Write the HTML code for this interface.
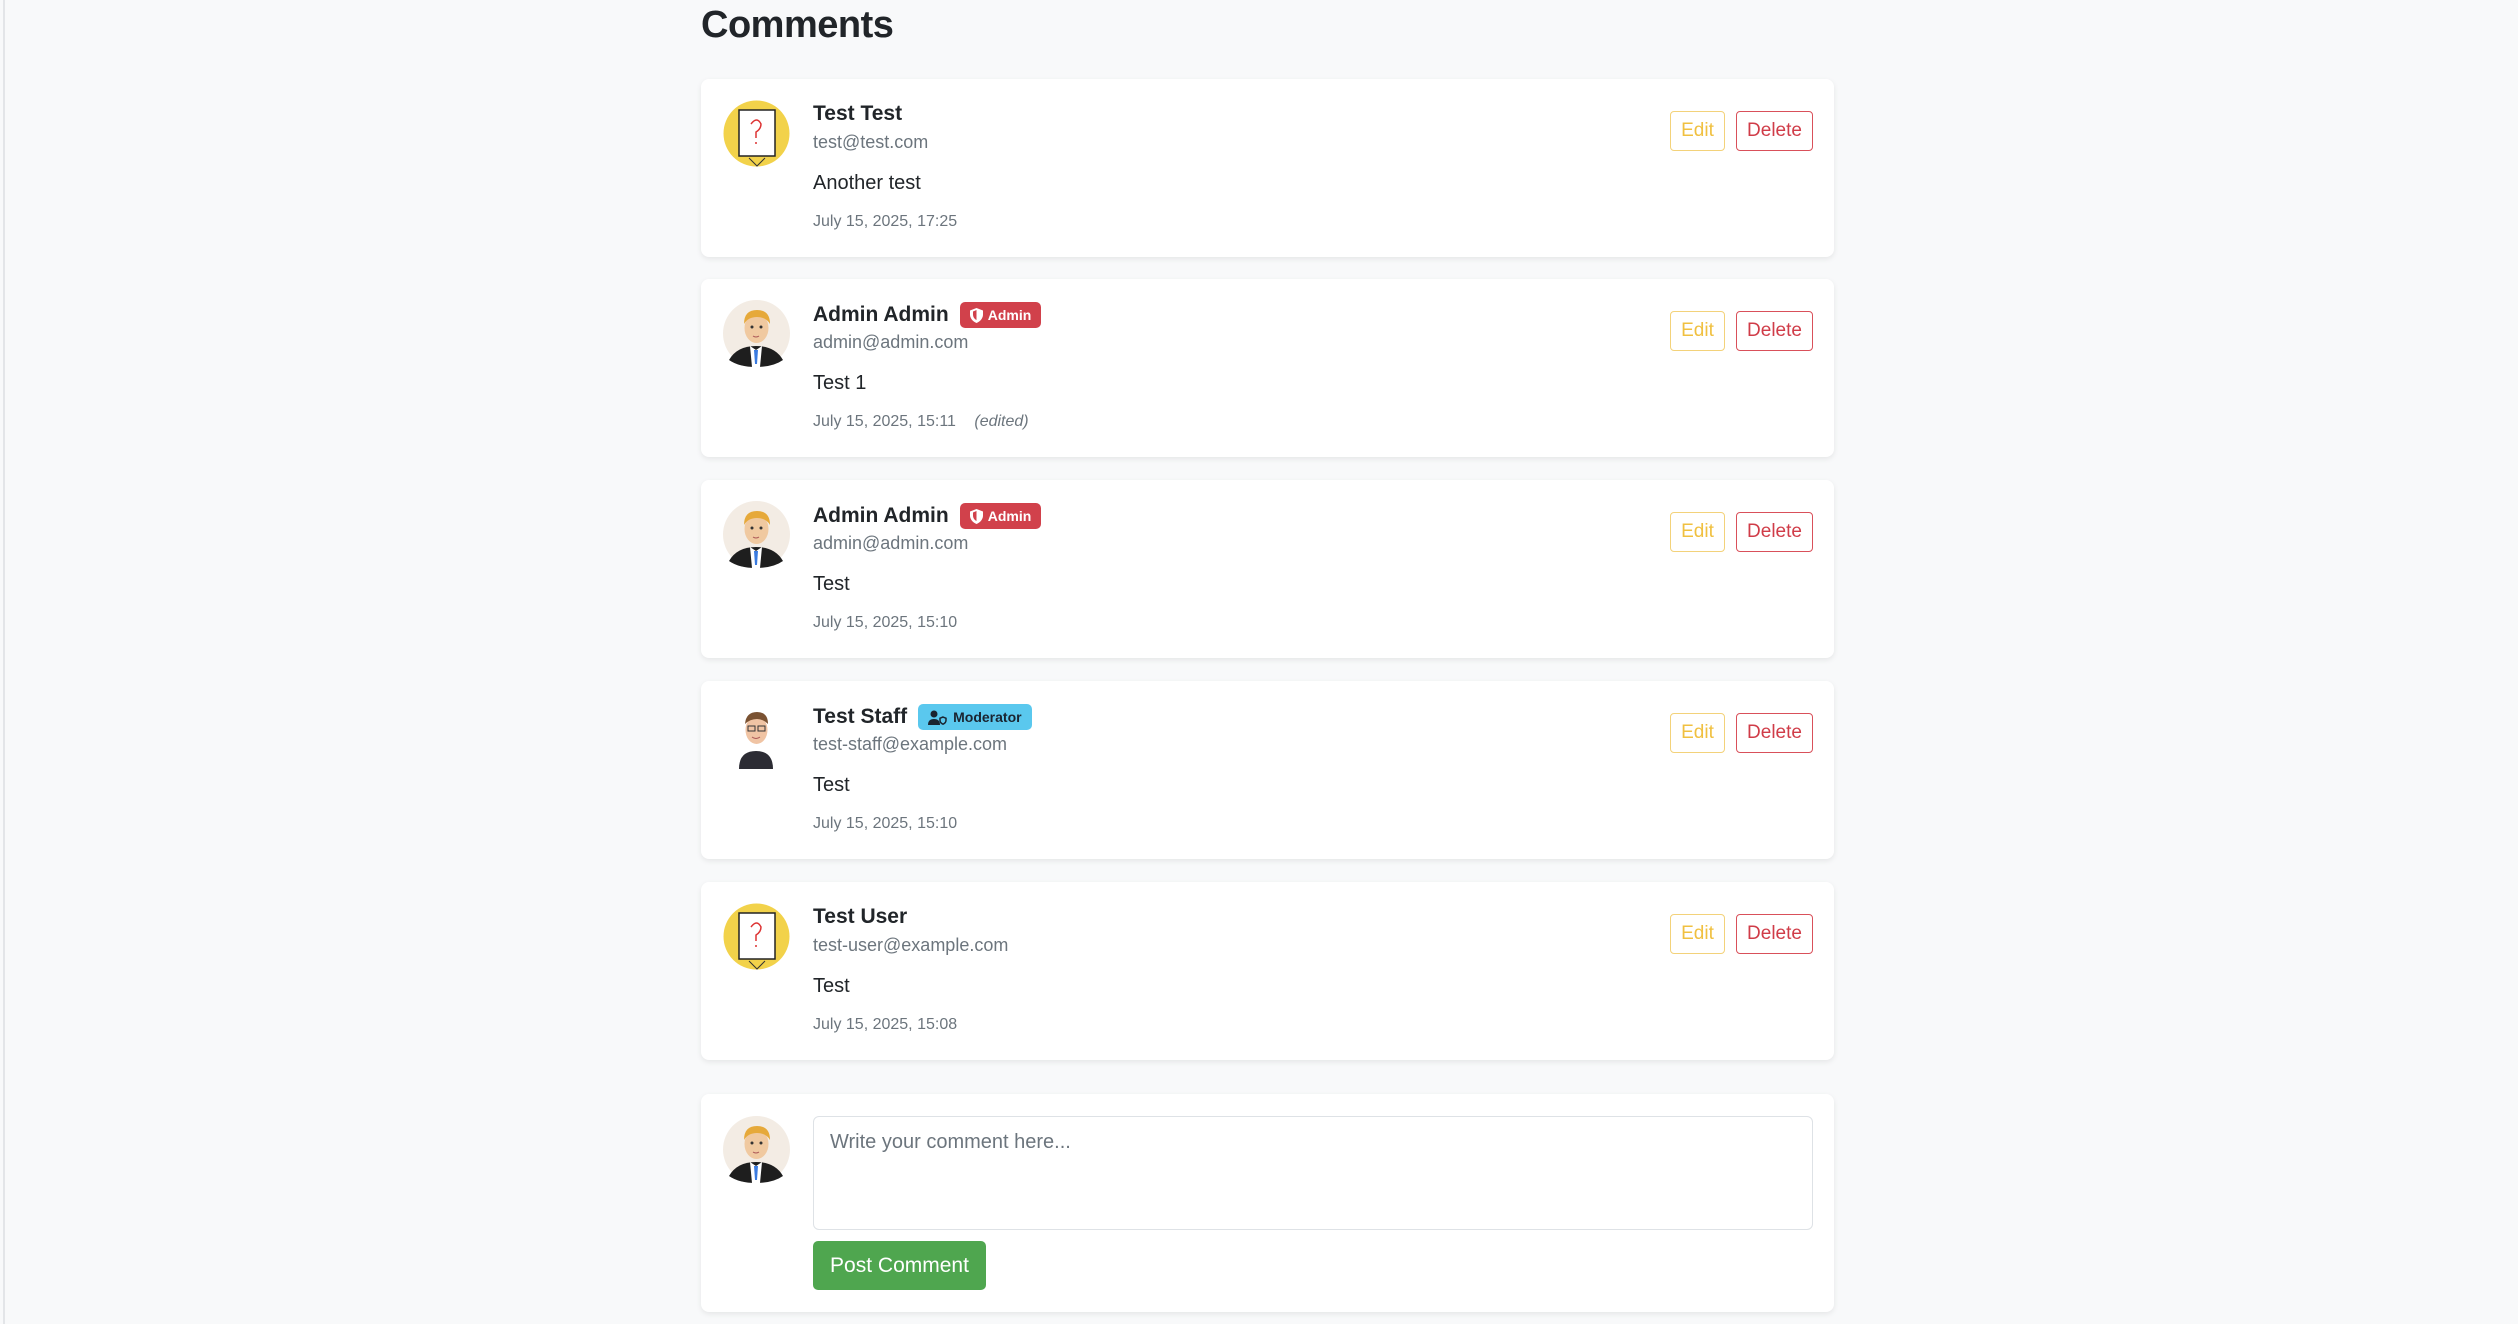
<!DOCTYPE html>
<html><head><meta charset="utf-8"><style>
*{box-sizing:border-box;margin:0;padding:0}
body{width:2518px;height:1324px;background:#f8f9fa;font-family:"Liberation Sans",sans-serif;color:#212529;position:relative;overflow:hidden}
.lb{position:absolute;left:3px;top:0;width:2px;height:1324px;background:#e3e5e8}
h1{position:absolute;left:701px;top:4px;font-size:38px;font-weight:600;letter-spacing:-0.5px}
.card{position:absolute;left:701px;width:1133px;height:178px;background:#fff;border-radius:8px;box-shadow:0 2px 6px rgba(0,0,0,.08)}
.av{position:absolute;left:22px;top:21px;width:67px;height:67px}
.name{position:absolute;left:112px;top:23px;font-size:21px;font-weight:600;white-space:nowrap;display:flex;align-items:center}
.email{position:absolute;left:112px;top:53px;font-size:18px;color:#6c757d}
.body{position:absolute;left:112px;top:93px;font-size:20px}
.date{position:absolute;left:112px;top:134px;font-size:16px;color:#6c757d}
.date i{margin-left:14px}
.btn{position:absolute;top:32px;height:40px;border-radius:4px;font-size:19px;display:flex;align-items:center;justify-content:center;background:#fff}
.edit{left:969px;width:55px;border:1.5px solid #f3d27a;color:#f0c040}
.del{left:1035px;width:77px;border:1.5px solid #d9505a;color:#d03c48}
.badge{margin-left:11px;height:26px;padding:0 10px;border-radius:5px;font-size:14px;font-weight:700;display:flex;align-items:center;gap:5px}
.adm{background:#d1414b;color:#fff}
.mod{background:#5ac8ee;color:#1a2430}
</style></head><body>
<div class="lb"></div>
<h1>Comments</h1>

<svg width="0" height="0" style="position:absolute">
<defs>
<symbol id="q" viewBox="0 0 67 67"><ellipse cx="33.5" cy="33.5" rx="33" ry="33" fill="#f2d24a"/><rect x="16" y="10" width="36" height="46" fill="#fff" stroke="#222" stroke-width="1.5"/><path d="M28 24q6-8 10 0q0 5-5 8v6" stroke="#d33" stroke-width="1.5" fill="none"/><circle cx="33" cy="43" r="1" fill="#d33"/><path d="M26 58l8 8l8-8" stroke="#333" fill="none"/></symbol>
<symbol id="adm" viewBox="0 0 67 67"><circle cx="33.5" cy="33.5" r="33.5" fill="#f3ece4"/><path d="M6 60q8-14 27-14q19 0 27 14q-10 7-27 7q-17 0-27-7z" fill="#1e1e1e"/><path d="M27 46l6 4l6-4l-2 21h-8z" fill="#fff"/><path d="M31 50h4l-1 14h-2z" fill="#3a7be0"/><ellipse cx="33.5" cy="28" rx="12" ry="15" fill="#f0c9a0"/><path d="M21 24q0-14 13-14q13 0 13 14q-4-7-13-7q-9 0-13 7z" fill="#e6a93a"/><circle cx="29" cy="27" r="1.5" fill="#333"/><circle cx="38" cy="27" r="1.5" fill="#333"/><path d="M30 36q3 2 6 0" stroke="#a55" fill="none"/></symbol>
<symbol id="stf" viewBox="0 0 67 67"><path d="M16 67q0-18 17-18q17 0 17 18z" fill="#2c2c34"/><ellipse cx="33.5" cy="28" rx="11" ry="14" fill="#f0c4a4"/><path d="M22 22q1-12 12-12q11 0 11 12q-5-5-11-5q-7 0-12 5z" fill="#7a5232"/><rect x="25" y="24" width="7" height="5" fill="none" stroke="#333"/><rect x="35" y="24" width="7" height="5" fill="none" stroke="#333"/><path d="M29 35q4 3 8 0" stroke="#a55" fill="none"/></symbol>
</defs></svg>

<div class="card" style="top:79px"><svg class="av"><use href="#q"/></svg><div class="name">Test Test</div><div class="email">test@test.com</div><div class="body">Another test</div><div class="date">July 15, 2025, 17:25</div><div class="btn edit">Edit</div><div class="btn del">Delete</div></div>

<div class="card" style="top:279px"><svg class="av"><use href="#adm"/></svg><div class="name">Admin Admin<span class="badge adm"><svg width="13" height="15" viewBox="0 0 13 15"><path d="M6.5 0L0 2.5v4c0 4 3 7 6.5 8.5c3.5-1.5 6.5-4.5 6.5-8.5v-4z" fill="#fff"/><path d="M6.5 2L3 3.5v3c0 2.5 1.5 4.5 3.5 5.5z" fill="#d1414b"/></svg>Admin</span></div><div class="email">admin@admin.com</div><div class="body">Test 1</div><div class="date">July 15, 2025, 15:11 <i>(edited)</i></div><div class="btn edit">Edit</div><div class="btn del">Delete</div></div>

<div class="card" style="top:480px"><svg class="av"><use href="#adm"/></svg><div class="name">Admin Admin<span class="badge adm"><svg width="13" height="15" viewBox="0 0 13 15"><path d="M6.5 0L0 2.5v4c0 4 3 7 6.5 8.5c3.5-1.5 6.5-4.5 6.5-8.5v-4z" fill="#fff"/><path d="M6.5 2L3 3.5v3c0 2.5 1.5 4.5 3.5 5.5z" fill="#d1414b"/></svg>Admin</span></div><div class="email">admin@admin.com</div><div class="body">Test</div><div class="date">July 15, 2025, 15:10</div><div class="btn edit">Edit</div><div class="btn del">Delete</div></div>

<div class="card" style="top:681px"><svg class="av"><use href="#stf"/></svg><div class="name">Test Staff<span class="badge mod"><svg width="20" height="15" viewBox="0 0 20 15"><circle cx="6" cy="4" r="3.5" fill="#1a2430"/><path d="M0 15q0-6 6-6q6 0 6 6z" fill="#1a2430"/><path d="M15 7l-3 1.2v2c0 2 1.5 3.3 3 4c1.5-.7 3-2 3-4v-2z" fill="none" stroke="#1a2430" stroke-width="1.5"/></svg>Moderator</span></div><div class="email">test-staff@example.com</div><div class="body">Test</div><div class="date">July 15, 2025, 15:10</div><div class="btn edit">Edit</div><div class="btn del">Delete</div></div>

<div class="card" style="top:882px"><svg class="av"><use href="#q"/></svg><div class="name">Test User</div><div class="email">test-user@example.com</div><div class="body">Test</div><div class="date">July 15, 2025, 15:08</div><div class="btn edit">Edit</div><div class="btn del">Delete</div></div>

<div class="card" style="top:1094px;height:218px"><svg class="av" style="top:22px"><use href="#adm"/></svg>
<div style="position:absolute;left:112px;top:22px;width:1000px;height:114px;border:1.5px solid #dee2e6;border-radius:6px;padding:14px 16px;font-size:20px;color:#6c757d">Write your comment here...</div>
<div style="position:absolute;left:112px;top:147px;width:173px;height:49px;background:#4fa64f;border-radius:5px;color:#fff;font-size:21px;display:flex;align-items:center;justify-content:center">Post Comment</div>
</div>
</body></html>
